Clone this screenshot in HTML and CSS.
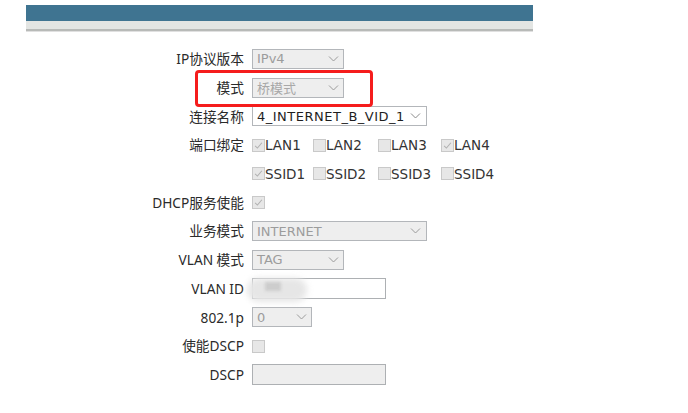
FILE: index.html
```html
<!DOCTYPE html>
<html lang="zh-CN">
<head>
<meta charset="utf-8">
<title>WAN 配置</title>
<link rel="stylesheet" href="styles.css">
</head>
<body>
<div class="header">
  <div class="bar"></div>
  <div class="band"></div>
</div>
<div class="form">
  <div class="mark"></div>

  <div class="lbl">IP协议版本</div>
  <div class="ctl"><div class="sel w92 dis"><span>IPv4</span><svg class="chev" viewBox="0 0 10 6"><path d="M0.5 0.5 L5 5 L9.5 0.5"/></svg></div></div>

  <div class="lbl">模式</div>
  <div class="ctl"><div class="sel w92 dis"><span class="cjk">桥模式</span><svg class="chev" viewBox="0 0 10 6"><path d="M0.5 0.5 L5 5 L9.5 0.5"/></svg></div></div>

  <div class="lbl">连接名称</div>
  <div class="ctl"><div class="sel w175 on"><span class="wide">4_INTERNET_B_VID_1</span><svg class="chev" viewBox="0 0 10 6"><path d="M0.5 0.5 L5 5 L9.5 0.5"/></svg></div></div>

  <div class="lbl">端口绑定</div>
  <div class="ctl"><div class="checks">
    <label class="ck"><span class="box"><svg viewBox="0 0 13 13"><path d="M2.5 7 L5.2 9.6 L10.5 3.2"/></svg></span>LAN1</label>
    <label class="ck"><span class="box"></span>LAN2</label>
    <label class="ck"><span class="box"></span>LAN3</label>
    <label class="ck"><span class="box"><svg viewBox="0 0 13 13"><path d="M2.5 7 L5.2 9.6 L10.5 3.2"/></svg></span>LAN4</label>
  </div></div>

  <div class="lbl"></div>
  <div class="ctl"><div class="checks">
    <label class="ck"><span class="box"><svg viewBox="0 0 13 13"><path d="M2.5 7 L5.2 9.6 L10.5 3.2"/></svg></span>SSID1</label>
    <label class="ck"><span class="box"></span>SSID2</label>
    <label class="ck"><span class="box"></span>SSID3</label>
    <label class="ck"><span class="box"></span>SSID4</label>
  </div></div>

  <div class="lbl">DHCP服务使能</div>
  <div class="ctl"><span class="box"><svg viewBox="0 0 13 13"><path d="M2.5 7 L5.2 9.6 L10.5 3.2"/></svg></span></div>

  <div class="lbl">业务模式</div>
  <div class="ctl"><div class="sel w175 dis"><span>INTERNET</span><svg class="chev" viewBox="0 0 10 6"><path d="M0.5 0.5 L5 5 L9.5 0.5"/></svg></div></div>

  <div class="lbl">VLAN 模式</div>
  <div class="ctl"><div class="sel w92 dis"><span>TAG</span><svg class="chev" viewBox="0 0 10 6"><path d="M0.5 0.5 L5 5 L9.5 0.5"/></svg></div></div>

  <div class="lbl">VLAN ID</div>
  <div class="ctl rel"><div class="inp"></div><div class="blur"></div><div class="blur2"></div></div>

  <div class="lbl">802.1p</div>
  <div class="ctl"><div class="sel w60 dis"><span>0</span><svg class="chev" viewBox="0 0 10 6"><path d="M0.5 0.5 L5 5 L9.5 0.5"/></svg></div></div>

  <div class="lbl">使能DSCP</div>
  <div class="ctl"><span class="box"></span></div>

  <div class="lbl">DSCP</div>
  <div class="ctl"><div class="inp grey"></div></div>
</div>
</body>
</html>
```

FILE: styles.css
```css
html, body {
  margin: 0;
  padding: 0;
  background: #ffffff;
}
body {
  width: 688px;
  height: 413px;
  overflow: hidden;
  font-family: "Noto Sans", "Noto Sans CJK SC", sans-serif;
}
.header {
  margin: 5px 0 0 26px;
  width: 507px;
}
.bar {
  height: 16px;
  background: #3f7491;
}
.band {
  height: 8px;
  background: #e3e5e3;
  border-bottom: 2px solid #b8bab8;
  box-shadow: 0 1px 0 #e0e0e0;
}
.form {
  position: relative;
  display: grid;
  grid-template-columns: 244px 1fr;
  column-gap: 8px;
  grid-auto-rows: 28.73px;
  align-items: center;
  margin-top: 13.6px;
}
.lbl {
  text-align: right;
  font-size: 13.7px;
  color: #2a2a2a;
  white-space: nowrap;
  line-height: 1;
}
.ctl {
  display: flex;
  align-items: center;
  height: 100%;
}
.rel {
  position: relative;
}
.sel {
  box-sizing: border-box;
  height: 20px;
  border: 1px solid #b3b6ba;
  background: #eeeeee;
  display: flex;
  align-items: center;
  justify-content: space-between;
  padding: 0 4px 0 4px;
  font-family: "DejaVu Sans", sans-serif;
  font-size: 13px;
  color: #9c9c9c;
  overflow: hidden;
}
.sel .cjk {
  font-family: "Noto Sans CJK SC", sans-serif;
  font-size: 13px;
  color: #a8a8a8;
}
.sel .wide {
  letter-spacing: 0.5px;
  white-space: nowrap;
}
.sel.on {
  background: #ffffff;
  color: #1e1e1e;
  padding-right: 5px;
}
.w92 { width: 92px; }
.w175 { width: 175px; padding-right: 5px; }
.w60 { width: 60px; }
.chev {
  width: 11px;
  height: 6px;
  flex: none;
  fill: none;
  stroke: #9a9a9a;
  stroke-width: 1;
}
.on .chev { stroke: #8a8a8a; }
.checks {
  display: grid;
  grid-template-columns: 61px 65px 63px auto;
  align-items: center;
}
.ck {
  display: flex;
  align-items: center;
  font-family: "DejaVu Sans", sans-serif;
  font-size: 13.5px;
  color: #333333;
  white-space: nowrap;
}
.box {
  box-sizing: border-box;
  width: 13px;
  height: 13px;
  border: 1px solid #c9c9c9;
  background: #e7e7e7;
  display: inline-flex;
  flex: none;
}
.box svg {
  width: 11px;
  height: 11px;
  fill: none;
  stroke: #b0b0b0;
  stroke-width: 1.2;
}
.inp {
  box-sizing: border-box;
  width: 134px;
  height: 21px;
  border: 1px solid #adb0b3;
  background: #ffffff;
}
.inp.grey {
  background: #eeeeee;
}
.blur {
  position: absolute;
  left: -5px;
  top: 4px;
  width: 60px;
  height: 24px;
  border-radius: 12px;
  background: #e6e6e6;
  filter: blur(3px);
}
.blur2 {
  position: absolute;
  left: 13px;
  top: 8px;
  width: 16px;
  height: 9px;
  background: #cdcdcd;
  filter: blur(1.5px);
}
.mark {
  position: absolute;
  left: 195px;
  top: 25.5px;
  width: 178px;
  height: 37px;
  box-sizing: border-box;
  border: 3px solid #f51c1c;
  border-radius: 4px;
  pointer-events: none;
  z-index: 2;
}
```
